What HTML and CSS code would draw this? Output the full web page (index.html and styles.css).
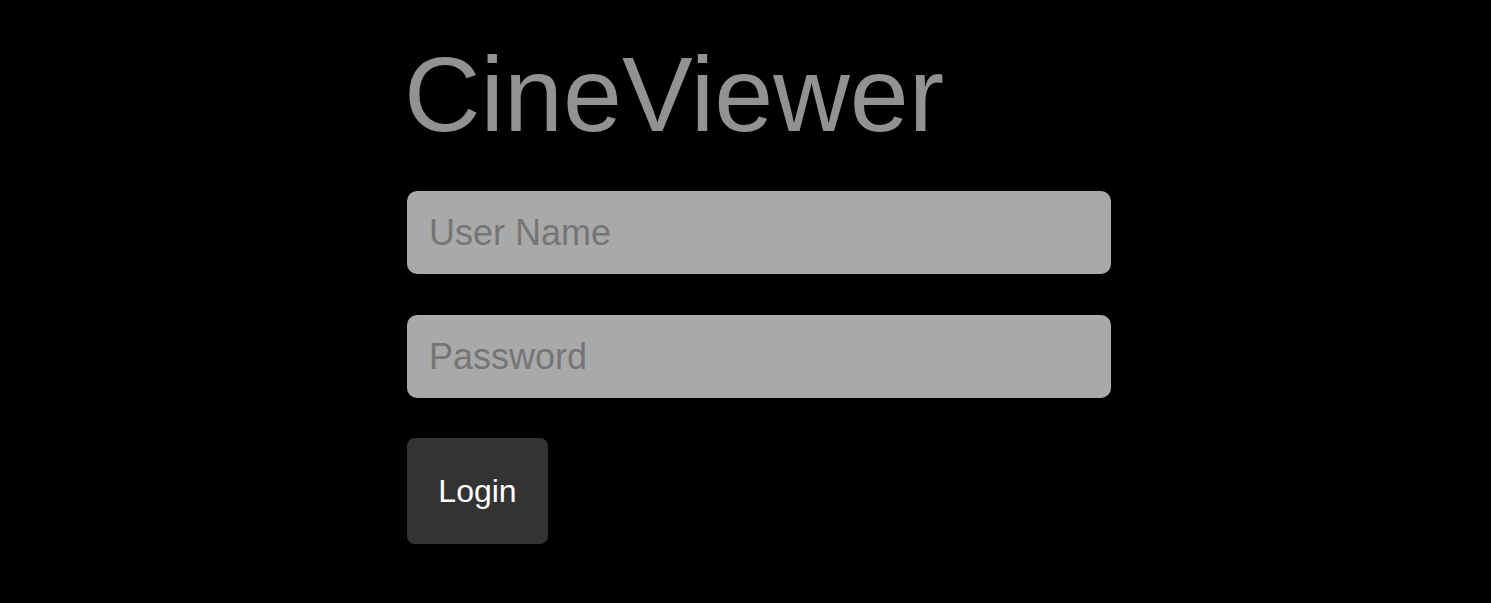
FILE: index.html
```html
<!DOCTYPE html>
<html lang="en">
<head>
<meta charset="utf-8">
<title>CineViewer</title>
<link rel="stylesheet" href="styles.css">
</head>
<body>
<main class="page">
  <h1 class="title">CineViewer</h1>
  <form class="login-form">
    <input class="field" type="text" placeholder="User Name">
    <input class="field" type="password" placeholder="Password">
    <button class="login-btn" type="button">Login</button>
  </form>
</main>
</body>
</html>
```

FILE: styles.css
```css
html, body {
  margin: 0;
  background: #000;
  height: 100%;
}
body {
  font-family: "Liberation Sans", Arial, sans-serif;
}
.page {
  padding: 34px 0 0 407px;
  width: 704px;
}
.title {
  margin: 0 0 0 -3px;
  font-size: 106px;
  line-height: 120px;
  font-weight: 400;
  color: #929292;
}
.login-form {
  display: flex;
  flex-direction: column;
  align-items: flex-start;
  gap: 41px;
  margin-top: 37px;
}
.field {
  box-sizing: border-box;
  width: 704px;
  height: 83px;
  padding: 0 22px;
  border: none;
  border-radius: 10px;
  background: #a9a9a9;
  font-family: "Liberation Sans", Arial, sans-serif;
  font-size: 36px;
  color: #333;
  outline: none;
}
.field::placeholder {
  color: #757575;
  opacity: 1;
}
.login-btn {
  box-sizing: border-box;
  width: 141px;
  height: 106px;
  margin-top: -1px;
  padding: 0;
  border: none;
  border-radius: 8px;
  background: #333;
  color: #fff;
  font-family: "Liberation Sans", Arial, sans-serif;
  font-size: 32px;
}
```
